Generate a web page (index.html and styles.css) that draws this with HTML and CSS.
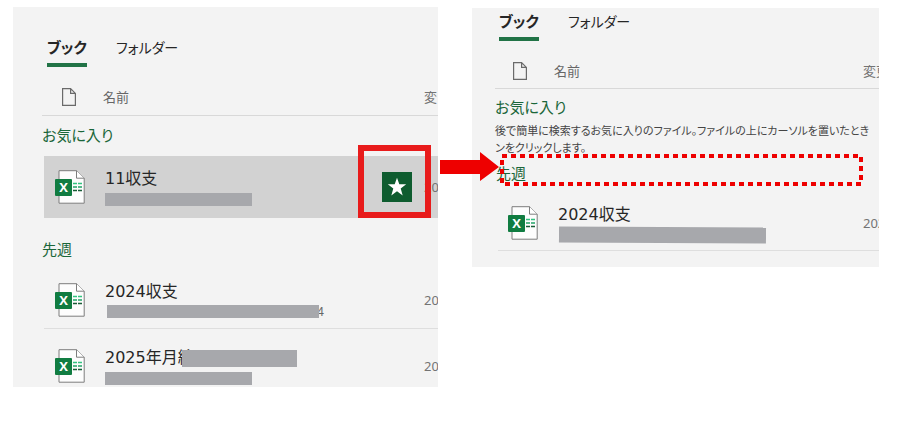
FILE: index.html
```html
<!DOCTYPE html>
<html lang="ja">
<head>
  <meta charset="UTF-8">
  <meta name="viewport" content="width=device-width, initial-scale=1.0">
  <title>お気に入りの解除</title>
  <link rel="stylesheet" href="styles.css">
</head>
<body>
  <!-- Shared icons -->
  <svg class="sprite" aria-hidden="true">
    <symbol id="icon-page" viewBox="0 0 14 18">
      <path d="M.6.6H8.600L13.400 5.400V17.400H.6zM8.600.6V5.400H13.400" fill="none" stroke="#6a6a6a" stroke-width="1.200"/>
    </symbol>
    <symbol id="icon-excel" viewBox="0 0 30 34">
      <path d="M4 .7H21.500L29.200 8.200V33.200H4z" fill="#fdfdfd" stroke="#7d7d7d" stroke-width="1"/>
      <path d="M21.500.7V8.200H29.200" fill="#fff" stroke="#7d7d7d" stroke-width="1"/>
      <path d="M18 13.500h4M23 13.500h4" stroke="#33c481" stroke-width="1.500"/>
      <path d="M18 17h4M23 17h4" stroke="#21a366" stroke-width="1.500"/>
      <path d="M18 20.500h4M23 20.500h4" stroke="#185c37" stroke-width="1.500"/>
      <rect x="0" y="9" width="17" height="17" rx="1" fill="#107c41"/>
      <text x="8.500" y="22" text-anchor="middle" font-family="Open Sans, sans-serif" font-weight="700" font-size="13" fill="#fff">X</text>
    </symbol>
  </svg>

  <main class="steps">
    <section class="panel panel-before">
      <nav class="tabs">
        <button type="button" class="tab active">ブック</button>
        <button type="button" class="tab">フォルダー</button>
      </nav>
      <div class="list-head">
        <svg class="page-icon"><use href="#icon-page"/></svg>
        <span>名前</span>
        <span class="date">変</span>
      </div>

      <h2>お気に入り</h2>
      <div class="file selected">
        <svg class="file-icon"><use href="#icon-excel"/></svg>
        <div class="file-text">
          <div class="file-name">11収支</div>
          <div class="file-path"><span class="mask mask-short"></span></div>
        </div>
        <div class="pin">
          <button type="button" class="star" aria-label="お気に入りから削除">
            <svg viewBox="0 0 20 20"><path d="M10 .8L12.300 7.300H19.200L13.700 11.500L15.700 18.400L10 14.300L4.300 18.400L6.300 11.500L.8 7.300H7.700z" fill="#fff"/></svg>
          </button>
        </div>
        <span class="date">20</span>
      </div>

      <h2>先週</h2>
      <div class="file">
        <svg class="file-icon"><use href="#icon-excel"/></svg>
        <div class="file-text">
          <div class="file-name">2024収支</div>
          <div class="file-path"><span class="mask mask-long"></span><span class="tail">4</span></div>
        </div>
        <span class="date">20</span>
      </div>
      <div class="file">
        <svg class="file-icon"><use href="#icon-excel"/></svg>
        <div class="file-text">
          <div class="file-name">2025年月給<span class="mask mask-name"></span></div>
          <div class="file-path"><span class="mask mask-short"></span></div>
        </div>
        <span class="date">20</span>
      </div>
    </section>

    <div class="after">
      <svg class="arrow" viewBox="0 0 60 30" aria-hidden="true"><path d="M0 8H40V0L59 15L40 29V22H0z" fill="#ee0000"/></svg>
      <section class="panel panel-after">
        <nav class="tabs">
          <button type="button" class="tab active">ブック</button>
          <button type="button" class="tab">フォルダー</button>
        </nav>
        <div class="list-head">
          <svg class="page-icon"><use href="#icon-page"/></svg>
          <span>名前</span>
          <span class="date">変更</span>
        </div>

        <h2>お気に入り</h2>
        <p class="hint">後で簡単に検索するお気に入りのファイル。ファイルの上にカーソルを置いたとき<br>ンをクリックします。</p>

        <div class="week">
          <h2>先週</h2>
          <svg class="dots" aria-hidden="true"><rect x="2" y="2" width="100%" height="28"/></svg>
        </div>
        <div class="file">
          <svg class="file-icon"><use href="#icon-excel"/></svg>
          <div class="file-text">
            <div class="file-name">2024収支</div>
            <div class="file-path"><span class="mask mask-tilt"></span></div>
          </div>
          <span class="date">202</span>
        </div>
      </section>
    </div>
  </main>
</body>
</html>
```
FILE: styles.css
```css
* {
  box-sizing: border-box;
}

body {
  margin: 0;
  background: #fff;
  color: #262626;
  font-family: "Noto Sans", "Noto Sans CJK JP", sans-serif;
  font-feature-settings: "palt";
}

.sprite {
  display: none;
}

.steps {
  display: grid;
  grid-template-columns: minmax(0, 425fr) minmax(0, 407fr);
  align-items: start;
  gap: 34px;
  padding: 7px 28px 36px 13px;
}

.panel {
  overflow: hidden;
  background: #f3f3f3;
}

/* Tabs */
.tabs {
  display: flex;
  gap: 29px;
}

.tab {
  height: 32px;
  padding: 0 0 4px;
  border: 0;
  border-bottom: 4px solid transparent;
  background: none;
  color: #262626;
  font: 14px/24px "Noto Sans CJK JP", sans-serif;
  font-feature-settings: "palt";
}

.tab.active {
  border-color: #217346;
  font-size: 15px;
  font-weight: 700;
}

/* Column headings */
.list-head {
  display: flex;
  align-items: center;
  border-bottom: 1px solid #d8d8d8;
  color: #666;
  font-size: 13px;
  line-height: 20px;
}

.page-icon {
  width: 14px;
  height: 18px;
  margin-right: 27px;
}

.date {
  flex: none;
  width: 14px;
  margin-left: auto;
  color: #737373;
  font-size: 13px;
  white-space: nowrap;
}

h2 {
  margin: 0;
  padding-bottom: 2px;
  color: #1a6639;
  font-size: 15px;
  font-weight: 400;
  line-height: 22px;
}

/* File rows */
.file {
  display: flex;
  align-items: center;
  height: 66px;
  padding-top: 8px;
  border-bottom: 1px solid #dedede;
}

.file.selected {
  height: 62px;
  padding-top: 0;
  border-bottom: 0;
  background: #d2d2d2;
}

.file-icon {
  flex: none;
  width: 30px;
  height: 34px;
  margin-right: 20px;
}

.file-text {
  min-width: 0;
}

.file-name {
  display: flex;
  align-items: center;
  height: 24px;
  font: 16px/24px "DejaVu Sans", "Noto Sans CJK JP", sans-serif;
  white-space: nowrap;
}

.file-path {
  display: flex;
  align-items: center;
  height: 16px;
  color: #666;
  font-size: 12px;
  line-height: 16px;
}

.mask {
  position: relative;
  background: #a7a8ac;
}

.mask-short {
  width: 147px;
  height: 13px;
}

.mask-long {
  width: 212px;
  height: 13px;
  margin-left: 2px;
}

.mask-name {
  width: 115px;
  height: 17px;
  margin-left: -12px;
}

.mask-tilt {
  width: 207px;
  height: 16px;
  margin-left: 1px;
  transform: rotate(.3deg);
}

.tail {
  margin-left: -2px;
}

/* Star button with its callout frame */
.pin {
  position: relative;
  flex: none;
  margin-left: auto;
  margin-right: 12px;
}

.pin + .date {
  margin-left: 0;
}

.pin::after {
  content: "";
  position: absolute;
  inset: -27px -19px -16px -24px;
  border: 6px solid #e81b1b;
  pointer-events: none;
}

.star {
  display: grid;
  place-items: center;
  width: 30px;
  height: 30px;
  padding: 0;
  border: 0;
  background: #0e5c2f;
}

.star svg {
  width: 20px;
  height: 20px;
}

/* Left panel */
.panel-before {
  padding-top: 28px;
}

.panel-before .tabs {
  padding-left: 34px;
}

.panel-before .list-head {
  height: 49px;
  margin-left: 29px;
  padding: 12px 0 0 20px;
}

.panel-before h2 {
  margin: 8px 0 8px 29px;
}

.panel-before .file {
  margin-left: 31px;
  padding-left: 11px;
}

.panel-before .selected + h2 {
  margin: 20px 0 1px 29px;
}

/* The list is cut just below the last file */
.panel-before .file:last-child {
  height: 58px;
  padding-top: 16px;
  border-bottom: 0;
}

/* Right panel */
.after {
  position: relative;
  padding-top: 1px;
}

.panel-after {
  padding: 1px 0 16px;
}

.panel-after .tabs {
  padding-left: 27px;
}

.panel-after .list-head {
  height: 48px;
  margin-left: 23px;
  padding: 12px 0 0 18px;
}

.panel-after .date {
  width: 16px;
}

.panel-after h2 {
  margin-left: 23px;
  padding-top: 7px;
}

.panel-after .file {
  height: 58px;
  padding-top: 2px;
  margin-left: 26px;
  padding-left: 10px;
}

.hint {
  margin: 2px 0 0 23px;
  color: #444;
  font-size: 11px;
  line-height: 17px;
  white-space: nowrap;
}

.week {
  position: relative;
  padding: 0 0 6px 1px;
}

.week h2 {
  padding-top: 6px;
  padding-bottom: 3px;
}

.dots {
  position: absolute;
  top: -2px;
  left: 28px;
  width: calc(100% - 44px);
  height: 33px;
}

.dots rect {
  width: calc(100% - 4px);
  fill: none;
  stroke: #ee0000;
  stroke-width: 4;
  stroke-dasharray: 5 4;
}

.arrow {
  position: absolute;
  z-index: 1;
  top: 145px;
  left: -32px;
  width: 60px;
  height: 30px;
}
```
